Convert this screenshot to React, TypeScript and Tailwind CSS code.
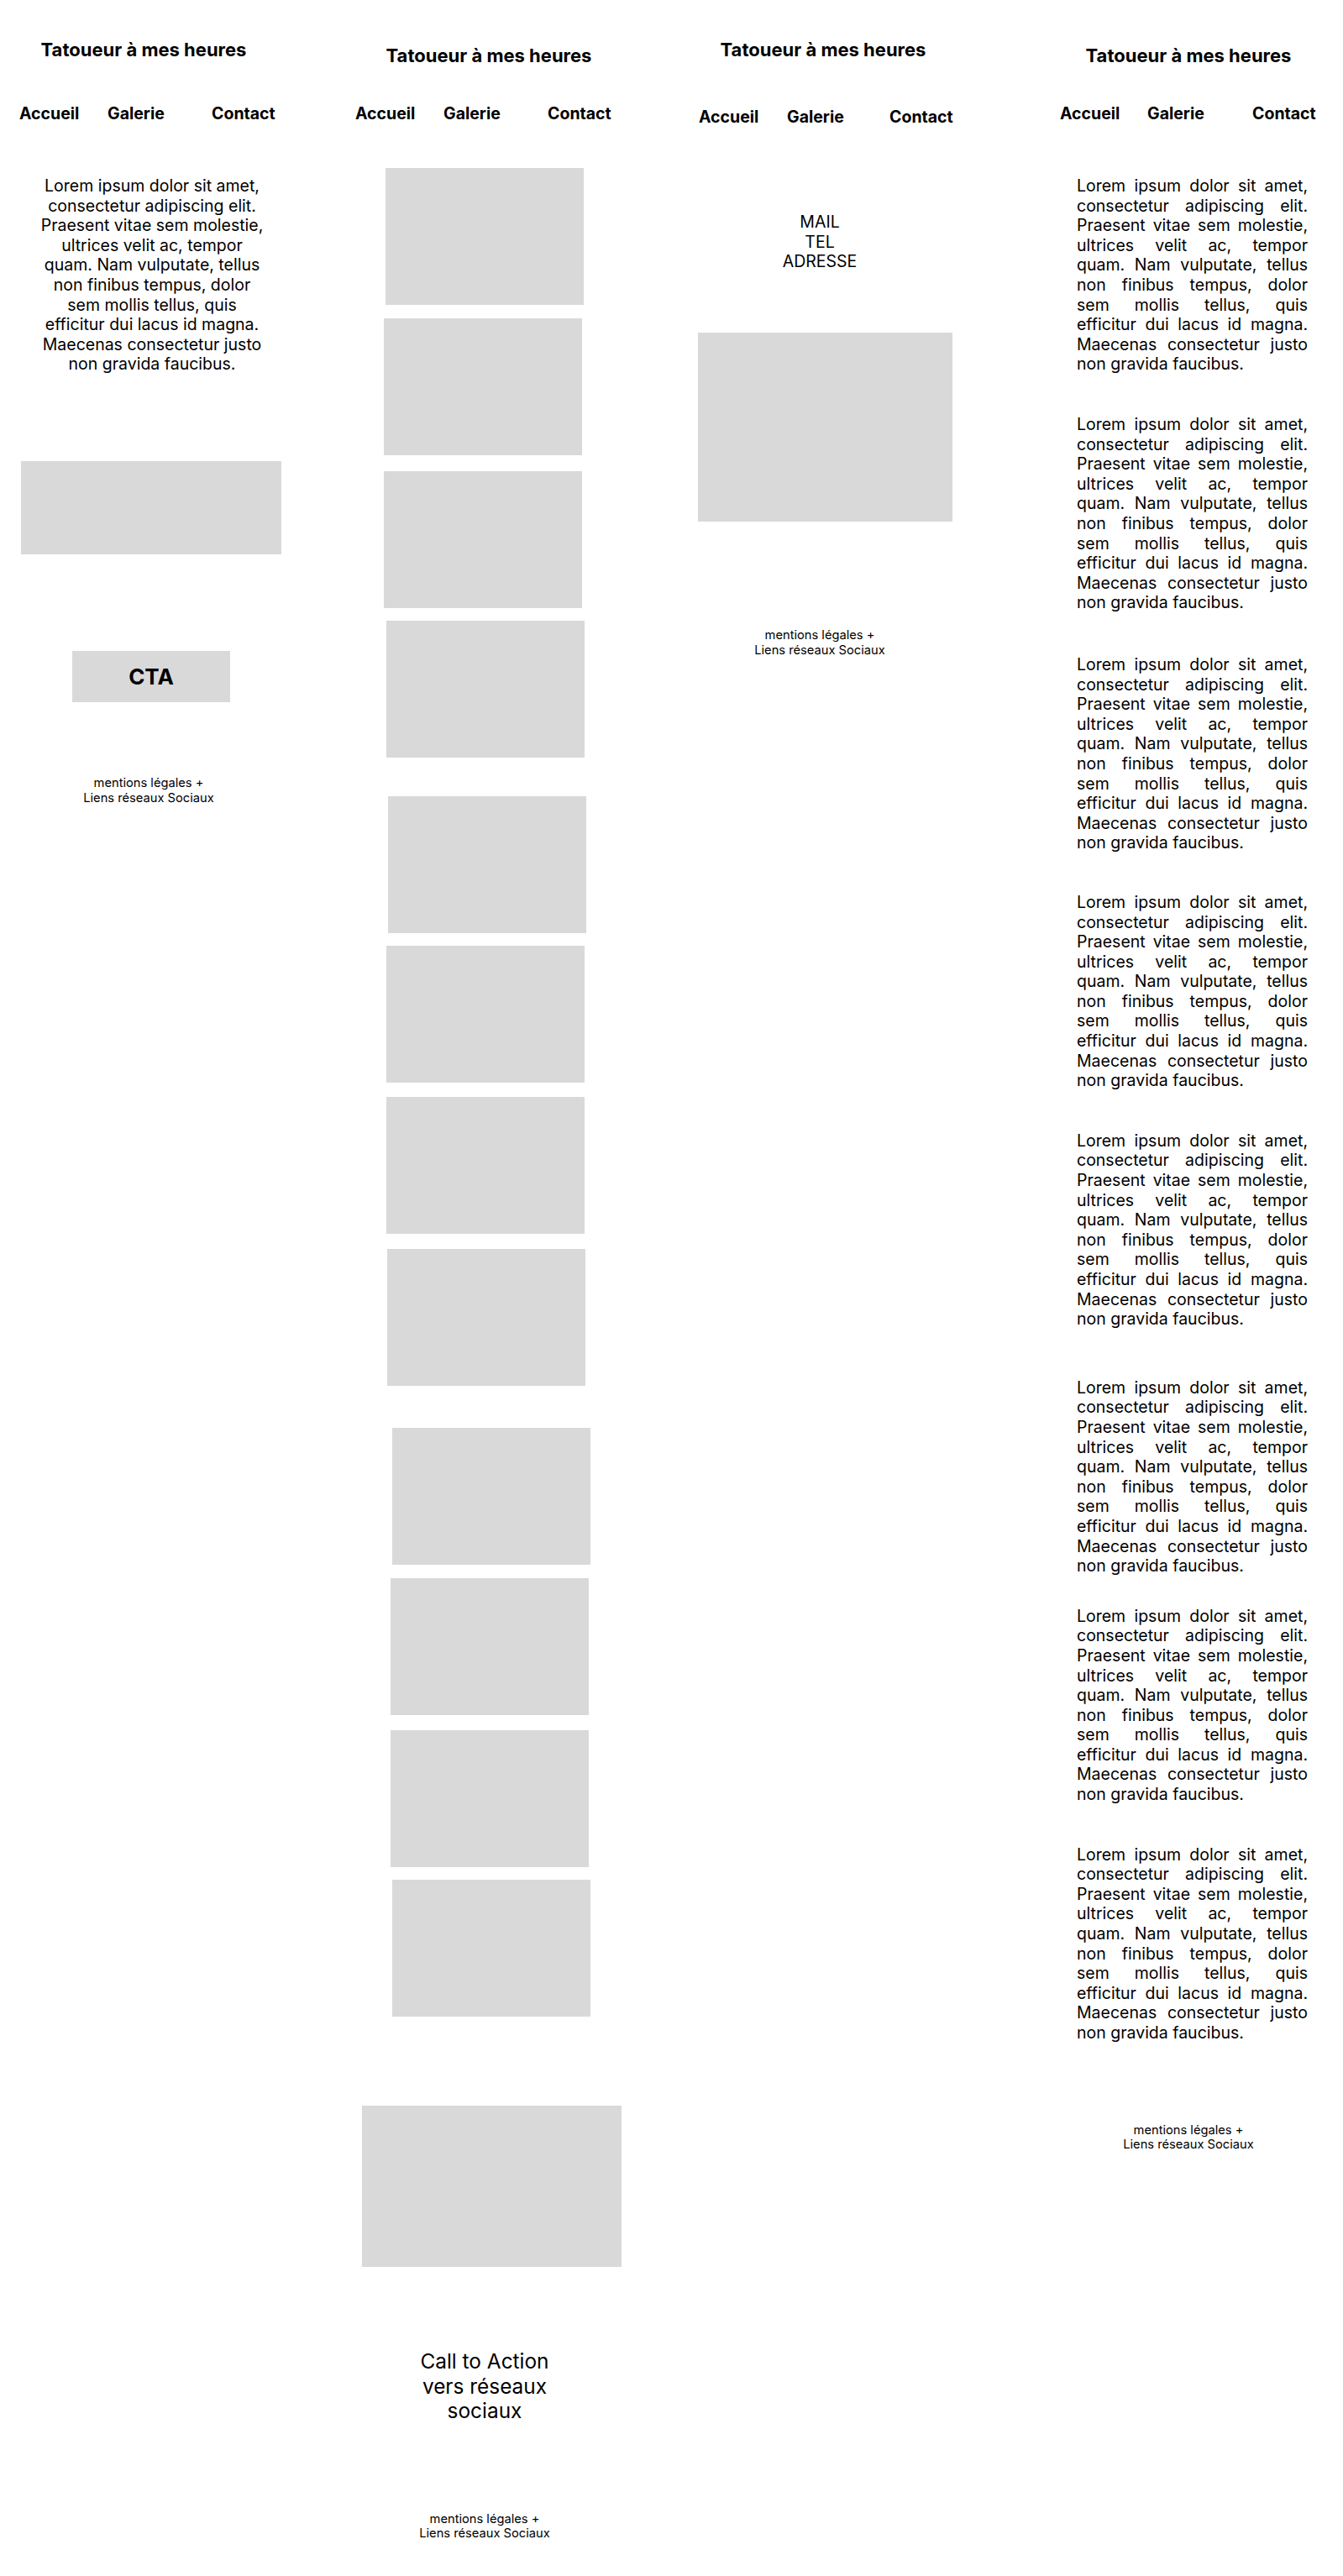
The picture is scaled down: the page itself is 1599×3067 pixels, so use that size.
import React from 'react'

const LOREM = [
  'Lorem ipsum dolor sit amet,',
  'consectetur adipiscing elit.',
  'Praesent vitae sem molestie,',
  'ultrices velit ac, tempor',
  'quam. Nam vulputate, tellus',
  'non finibus tempus, dolor',
  'sem mollis tellus, quis',
  'efficitur dui lacus id magna.',
  'Maecenas consectetur justo',
  'non gravida faucibus.',
]

const Title = ({ className }: { className: string }) => (
  <h1 className={`w-[300px] text-center text-[22px] font-bold leading-[29.5px] whitespace-nowrap ${className}`}>
    Tatoueur à mes heures
  </h1>
)

// cells are fixed width so each label starts where it does in the mockup
const Nav = ({ className, first, second }: { className: string; first: string; second: string }) => (
  <nav className={`flex text-[19.5px] font-bold leading-[1.21] whitespace-nowrap ${className}`}>
    <span className={first}>Accueil</span>
    <span className={second}>Galerie</span>
    <span>Contact</span>
  </nav>
)

const Footer = ({ className }: { className: string }) => (
  <footer className={`w-[200px] text-center text-[14.7px] leading-[1.21] ${className}`}>
    <p>mentions légales +</p>
    <p>Liens réseaux Sociaux</p>
  </footer>
)

const Block = ({ className }: { className: string }) => <div className={`bg-[#d9d9d9] ${className}`} />

const CenteredLorem = ({ className }: { className: string }) => (
  <div className={`text-center text-[19.5px] leading-[23.6px] ${className}`}>
    {LOREM.map((line) => (
      <p key={line}>{line}</p>
    ))}
  </div>
)

const JustifiedLorem = ({ className }: { className: string }) => (
  <div className={`w-[275px] text-[19.5px] leading-[23.6px] ${className}`}>
    {LOREM.map((line, i) => (
      <p key={line} className={i < LOREM.length - 1 ? 'text-justify [text-align-last:justify]' : 'text-left'}>
        {line}
      </p>
    ))}
  </div>
)

const galleryBoxes = [
  'mt-[53px] ml-[59px]',
  'mt-[16px] ml-[57px]',
  'mt-[19px] ml-[57px]',
  'mt-[15px] ml-[60px]',
  'mt-[46px] ml-[62px]',
  'mt-[15px] ml-[60px]',
  'mt-[17px] ml-[60px]',
  'mt-[18px] ml-[61px]',
  'mt-[50px] ml-[67px]',
  'mt-[16px] ml-[65px]',
  'mt-[18px] ml-[65px]',
  'mt-[15px] ml-[67px]',
]

const loremBlocks = [
  'mt-[63px]',
  'mt-[48px]',
  'mt-[50px]',
  'mt-[47px]',
  'mt-[48px]',
  'mt-[58px]',
  'mt-[36px]',
  'mt-[48px]',
]

export default function App() {
  return (
    <div className="flex min-h-[3067px] w-[1599px] bg-white font-['Inter',sans-serif] text-black">
      {/* Accueil */}
      <section className="flex w-[400px] shrink-0 flex-col pt-[45px]">
        <Title className="ml-[21px]" />
        <Nav className="mt-[49px] ml-[23px]" first="w-[105px]" second="w-[124px]" />
        <CenteredLorem className="mt-[63px] ml-[31px] w-[300px]" />
        <Block className="mt-[103px] ml-[25px] h-[111px] w-[310px]" />
        <div className="mt-[115px] ml-[86px] flex h-[61px] w-[188px] items-center justify-center bg-[#d9d9d9] text-[26px] font-bold leading-none">
          CTA
        </div>
        <Footer className="mt-[88px] ml-[77px]" />
      </section>

      {/* Galerie */}
      <section className="flex w-[400px] shrink-0 flex-col pt-[52px]">
        <Title className="ml-[32px]" />
        <Nav className="mt-[42px] ml-[23px]" first="w-[105px]" second="w-[124px]" />
        {galleryBoxes.map((cls, i) => (
          <Block key={i} className={`h-[163px] w-[236px] ${cls}`} />
        ))}
        <Block className="mt-[106px] ml-[31px] h-[192px] w-[309px]" />
        <div className="mt-[98px] ml-[77px] w-[200px] text-center text-[24.4px] leading-[1.21]">
          <p>Call to Action</p>
          <p>vers réseaux</p>
          <p>sociaux</p>
        </div>
        <Footer className="mt-[105px] ml-[77px]" />
      </section>

      {/* Contact */}
      <section className="flex w-[399px] shrink-0 flex-col pt-[45px]">
        <Title className="ml-[30px]" />
        <Nav className="mt-[53px] ml-[32px]" first="w-[105px]" second="w-[122px]" />
        <div className="mt-[102px] ml-[76px] w-[200px] text-center text-[19.5px] leading-[23.6px]">
          <p>MAIL</p>
          <p>TEL</p>
          <p>ADRESSE</p>
        </div>
        <Block className="mt-[72px] ml-[31px] h-[225px] w-[303px]" />
        <Footer className="mt-[127px] ml-[76px]" />
      </section>

      {/* Accueil, texte long */}
      <section className="flex w-[400px] shrink-0 flex-col pt-[52px]">
        <Title className="ml-[66px]" />
        <Nav className="mt-[42px] ml-[63px]" first="w-[104px]" second="w-[125px]" />
        {loremBlocks.map((cls, i) => (
          <JustifiedLorem key={i} className={`ml-[83px] ${cls}`} />
        ))}
        <Footer className="mt-[95px] ml-[116px]" />
      </section>
    </div>
  )
}
